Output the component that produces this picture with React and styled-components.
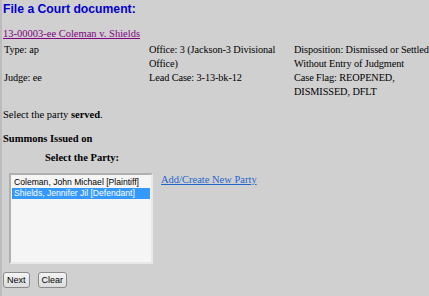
import React from "react";
import styled, { createGlobalStyle } from "styled-components";

const Global = createGlobalStyle`
  html, body {
    margin: 0;
    padding: 0;
    background: #d0d0d0;
  }
  body {
    font-family: "Liberation Serif", "Times New Roman", serif;
    font-size: 10.5px;
    color: #000;
  }
`;

const parties = [
  { name: "Coleman, John Michael [Plaintiff]", selected: false },
  { name: "Shields, Jennifer Jil [Defendant]", selected: true },
];

const App = () => {
  return (
    <>
      <Global />
      <Page>
        <Title>File a Court document:</Title>
        <CaseLink href="#">13-00003-ee Coleman v. Shields</CaseLink>
        <CaseTable>
          <Cell>Type: ap</Cell>
          <Cell>Office: 3 (Jackson-3 Divisional Office)</Cell>
          <Cell>Disposition: Dismissed or Settled Without Entry of Judgment</Cell>
          <Cell>Judge: ee</Cell>
          <Cell>Lead Case: 3-13-bk-12</Cell>
          <Cell>Case Flag: REOPENED, DISMISSED, DFLT</Cell>
        </CaseTable>
        <Note>
          Select the party <b>served</b>.
        </Note>
        <Heading>Summons Issued on</Heading>
        <SubHeading>Select the Party:</SubHeading>
        <PartyRow>
          <ListBox>
            {parties.map((p) => (
              <Option key={p.name} $selected={p.selected}>
                {p.name}
              </Option>
            ))}
          </ListBox>
          <AddLink href="#">Add/Create New Party</AddLink>
        </PartyRow>
        <Buttons>
          <Button>Next</Button>
          <Button>Clear</Button>
        </Buttons>
      </Page>
    </>
  );
};

//STYLES
const Page = styled.div`
  height: 296px;
  box-sizing: border-box;
  border-left: 2px solid #bcbcbc;
  padding: 1px 0 0 1px;
  overflow: hidden;
`;

const Title = styled.div`
  font-family: "Liberation Sans", Arial, sans-serif;
  font-weight: bold;
  font-size: 12.2px;
  line-height: 16px;
  color: #0000cc;
`;

const CaseLink = styled.a`
  display: inline-block;
  margin-top: 10px;
  color: #800080;
  text-decoration: underline;
  line-height: 14px;
`;

const CaseTable = styled.div`
  display: grid;
  grid-template-columns: 145px 145px 1fr;
  margin-top: 2px;
  line-height: 14px;
`;

const Cell = styled.div`
  padding: 0 0 0 1px;
  font-size: 10.3px;
  letter-spacing: -0.1px;
`;

const Note = styled.div`
  margin-top: 9px;
  line-height: 14px;
`;

const Heading = styled.div`
  margin-top: 10px;
  font-weight: bold;
  line-height: 14px;
`;

const SubHeading = styled.div`
  margin-top: 5px;
  padding-left: 42px;
  font-weight: bold;
  line-height: 14px;
`;

const PartyRow = styled.div`
  display: flex;
  align-items: flex-start;
  gap: 8px;
  margin-top: 8px;
  padding-left: 6px;
`;

const ListBox = styled.div`
  width: 140px;
  height: 83px;
  background: #f5f5f5;
  border: 2px solid #e8e8e8;
  border-top-color: #b0b0b0;
  border-left-color: #b0b0b0;
  padding: 2px 0;
  font-family: "Liberation Sans", Arial, sans-serif;
  font-size: 8.6px;
  line-height: 11px;
`;

const Option = styled.div`
  margin: 0 1px;
  padding: 0 2px;
  white-space: nowrap;
  background: ${(p) => (p.$selected ? "#3399ff" : "transparent")};
  color: ${(p) => (p.$selected ? "#fff" : "#000")};
`;

const AddLink = styled.a`
  color: #1f66cc;
  text-decoration: underline;
  line-height: 14px;
`;

const Buttons = styled.div`
  display: flex;
  gap: 8px;
  margin-top: 8px;
  padding-left: 0;
`;

const Button = styled.button`
  font-family: "Liberation Sans", Arial, sans-serif;
  font-size: 9px;
  padding: 0 3px;
  height: 16px;
  line-height: 12px;
  background: linear-gradient(#f4f4f4, #dcdcdc);
  border: 1px solid #8a8a8a;
  border-radius: 3px;
  color: #000;
`;

export default App;
